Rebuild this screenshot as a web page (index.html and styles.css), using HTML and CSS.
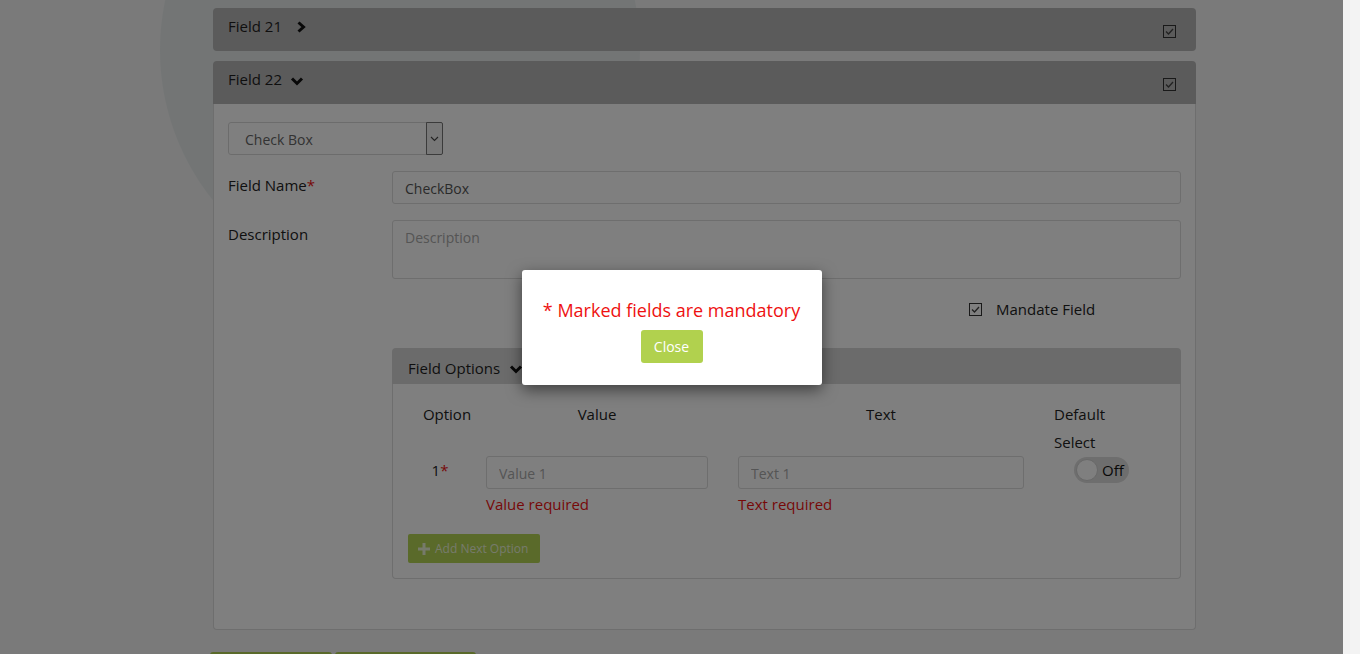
FILE: index.html
```html
<!DOCTYPE html>
<html lang="en">
<head>
<meta charset="utf-8">
<title>Fields</title>
<link rel="stylesheet" href="styles.css">
</head>
<body>
<div class="page">
  <div class="bg-circle"></div>
  <div class="container">
    <div class="panel">
      <div class="panel-head">
        <span class="title">Field 21</span>
        <svg class="chev" width="14" height="14" viewBox="0 0 14 14"><polyline points="4.5,2.5 9.5,7 4.5,11.5" fill="none" stroke="#111" stroke-width="3"/></svg>
        <svg class="head-check" width="13" height="13" viewBox="0 0 13 13"><rect x="0.5" y="0.5" width="12" height="12" fill="none" stroke="#333"/><polyline points="3,6.5 5.5,9 10,4" fill="none" stroke="#444" stroke-width="1.3"/></svg>
      </div>
    </div>
    <div class="panel open">
      <div class="panel-head">
        <span class="title">Field 22</span>
        <svg class="chev down" width="14" height="14" viewBox="0 0 14 14"><polyline points="2,4.5 7,9.5 12,4.5" fill="none" stroke="#111" stroke-width="3"/></svg>
        <svg class="head-check" width="13" height="13" viewBox="0 0 13 13"><rect x="0.5" y="0.5" width="12" height="12" fill="none" stroke="#333"/><polyline points="3,6.5 5.5,9 10,4" fill="none" stroke="#444" stroke-width="1.3"/></svg>
      </div>
      <div class="panel-body">
        <div class="select">
          <span class="select-text">Check Box</span>
          <span class="select-arrow"><svg width="9" height="6" viewBox="0 0 9 6"><polyline points="1,1 4.5,4.5 8,1" fill="none" stroke="#444" stroke-width="1.1"/></svg></span>
        </div>
        <div class="form-row first">
          <label class="label">Field Name<span class="req">*</span></label>
          <input class="input" type="text" value="CheckBox">
        </div>
        <div class="form-row">
          <label class="label">Description</label>
          <textarea class="input textarea" placeholder="Description"></textarea>
        </div>
        <div class="form-row">
          <span></span>
          <div class="mandate">
            <svg width="13" height="13" viewBox="0 0 13 13"><rect x="0.5" y="0.5" width="12" height="12" fill="none" stroke="#333"/><polyline points="3,6.5 5.5,9 10,4" fill="none" stroke="#444" stroke-width="1.3"/></svg>
            <span>Mandate Field</span>
          </div>
        </div>
        <div class="form-row">
          <span></span>
          <div class="options">
            <div class="options-head">
              <span>Field Options</span>
              <svg class="chev down" width="14" height="14" viewBox="0 0 14 14"><polyline points="2,4.5 7,9.5 12,4.5" fill="none" stroke="#111" stroke-width="3"/></svg>
            </div>
            <div class="options-body">
              <div class="opt-grid">
                <div class="col-h center">Option</div>
                <div class="col-h center pr">Value</div>
                <div class="col-h center pr">Text</div>
                <div class="col-h default">Default Select</div>

                <div class="opt-num">1<span class="req">*</span></div>
                <div class="pr">
                  <input class="input" type="text" placeholder="Value 1">
                  <div class="error">Value required</div>
                </div>
                <div class="pr">
                  <input class="input" type="text" placeholder="Text 1">
                  <div class="error">Text required</div>
                </div>
                <div>
                  <div class="toggle"><span class="knob"></span><span class="toggle-text">Off</span></div>
                </div>
              </div>
              <button class="add-btn" type="button">
                <svg width="12" height="12" viewBox="0 0 12 12"><path d="M4.5 0h3v4.5H12v3H7.5V12h-3V7.5H0v-3h4.5z" fill="rgba(255,255,255,0.75)"/></svg>
                <span>Add Next Option</span>
              </button>
            </div>
          </div>
        </div>
      </div>
    </div>
    <div class="actions">
      <button class="green-btn wide1" type="button" aria-label="Save"></button>
      <button class="green-btn wide2" type="button" aria-label="Save and next"></button>
    </div>
  </div>
  <div class="overlay"></div>
  <div class="modal-wrap">
    <div class="modal">
      <p class="modal-text">* Marked fields are mandatory</p>
      <button class="close-btn" type="button">Close</button>
    </div>
  </div>
</div>
<div class="scrollbar"></div>
</body>
</html>
```
FILE: styles.css
```css
html, body {
  margin: 0;
  height: 100%;
  overflow: hidden;
}
body {
  display: flex;
  font-family: "Open Sans", "Liberation Sans", sans-serif;
  background: #f3f3f3;
  color: #222;
}
.page {
  position: relative;
  flex: none;
  width: 1343px;
  height: 654px;
  overflow: hidden;
  background: #f4f4f4;
}
.scrollbar {
  flex: 1;
  background: #f3f3f3;
}
.bg-circle {
  position: absolute;
  left: 160px;
  top: -190px;
  width: 480px;
  height: 480px;
  border-radius: 50%;
  background: #e6ebeb;
}
.container {
  position: relative;
  margin-left: 213px;
  width: 983px;
  padding-top: 8px;
}
.panel {
  margin-bottom: 10px;
}
.panel-head {
  height: 43px;
  box-sizing: border-box;
  background: #b6b6b6;
  border-radius: 4px;
  display: flex;
  align-items: flex-start;
  padding: 8px 20px 0 15px;
  font-size: 15px;
  line-height: 20px;
  color: #1e1e1e;
}
.open .panel-head {
  border-radius: 4px 4px 0 0;
}
.chev {
  margin-left: 12px;
  margin-top: 4px;
}
.chev.down {
  margin-left: 8px;
  margin-top: 5px;
}
.head-check {
  margin-left: auto;
  margin-top: 9px;
}
.panel-body {
  background: #fff;
  border: 1px solid #dcdcdc;
  border-top: 0;
  border-radius: 0 0 4px 4px;
  padding: 18px 14px 50px 14px;
}
.select {
  width: 215px;
  height: 33px;
  box-sizing: border-box;
  border: 1px solid #d8d8d8;
  border-radius: 3px;
  display: flex;
  align-items: stretch;
  background: #fff;
}
.select-text {
  flex: 1;
  padding-left: 16px;
  padding-top: 1px;
  font-size: 14px;
  line-height: 31px;
  color: #666;
}
.select-arrow {
  width: 17px;
  box-sizing: border-box;
  border: 1px solid #777;
  border-radius: 0 2px 2px 0;
  margin: -1px -1px -1px 0;
  background: #f0f0f0;
  display: flex;
  align-items: center;
  justify-content: center;
}
.form-row {
  display: grid;
  grid-template-columns: 164px 1fr;
  margin-top: 16px;
}
.label {
  font-size: 15px;
  line-height: 20px;
  padding-top: 4px;
  color: #222;
}
.req {
  color: #ee1111;
}
.input {
  display: block;
  width: 100%;
  height: 33px;
  box-sizing: border-box;
  border: 1px solid #dcdcdc;
  border-radius: 3px;
  padding: 2px 12px 0 12px;
  font-family: "Open Sans", "Liberation Sans", sans-serif;
  font-size: 14px;
  color: #555;
  background: #fff;
  outline: none;
}
.input::placeholder {
  color: #aaa;
}
.textarea {
  height: 59px;
  padding-top: 7px;
  resize: none;
}
.mandate {
  display: flex;
  align-items: center;
  gap: 14px;
  padding-left: 577px;
  margin-top: 4px;
  font-size: 15px;
  line-height: 20px;
  color: #222;
}
.options {
  margin-top: 13px;
}
.options-head {
  height: 36px;
  box-sizing: border-box;
  background: #d6d6d6;
  border-radius: 4px 4px 0 0;
  padding: 10px 15px 0 16px;
  display: flex;
  align-items: flex-start;
  font-size: 15px;
  line-height: 20px;
  color: #1e1e1e;
}
.options-head .chev.down {
  margin-left: 9px;
  margin-top: 4px;
}
.options-body {
  border: 1px solid #dcdcdc;
  border-top: 0;
  border-radius: 0 0 4px 4px;
  padding: 16px 15px 15px 15px;
}
.opt-grid {
  display: grid;
  grid-template-columns: 78px 252px 316px 1fr;
  font-size: 15px;
  color: #222;
}
.col-h {
  line-height: 28px;
}
.center {
  text-align: center;
}
.pr {
  padding-right: 30px;
}
.default {
  width: 70px;
}
.opt-num {
  text-align: center;
  line-height: 28px;
  padding-right: 14px;
}
.error {
  margin-top: 5px;
  line-height: 20px;
  font-size: 15px;
  color: #ee1111;
}
.toggle {
  margin-left: 20px;
  margin-top: 1px;
  width: 55px;
  height: 26px;
  box-sizing: border-box;
  border-radius: 13px;
  background: #dcdcdc;
  display: flex;
  align-items: center;
  padding-left: 2px;
}
.knob {
  width: 22px;
  height: 22px;
  border-radius: 50%;
  background: #fff;
  box-sizing: border-box;
  border: 1px solid #d0d0d0;
}
.toggle-text {
  margin-left: 4px;
  font-size: 15px;
  color: #111;
}
.add-btn {
  margin-top: 20px;
  height: 29px;
  width: 132px;
  border: 0;
  border-radius: 2px;
  background: #b4d454;
  display: flex;
  align-items: center;
  gap: 5px;
  padding: 0 10px;
  font-family: "Open Sans", "Liberation Sans", sans-serif;
  font-size: 12px;
  color: rgba(255, 255, 255, 0.78);
}
.actions {
  display: flex;
  gap: 3px;
  margin-top: 22px;
  margin-left: -3px;
}
.green-btn {
  height: 34px;
  border: 0;
  border-radius: 3px;
  background: #b4d454;
}
.wide1 { width: 122px; }
.wide2 { width: 141px; }
.overlay {
  position: absolute;
  inset: 0;
  background: rgba(0, 0, 0, 0.5);
}
.modal-wrap {
  position: absolute;
  inset: 0;
  display: flex;
  align-items: center;
  justify-content: center;
}
.modal {
  width: 300px;
  height: 115px;
  box-sizing: border-box;
  background: #fff;
  border-radius: 3px;
  box-shadow: 0 5px 15px rgba(0, 0, 0, 0.5);
  padding-top: 28px;
  text-align: center;
}
.modal-text {
  margin: 0;
  font-size: 18px;
  line-height: 24px;
  color: #ee1111;
}
.close-btn {
  margin-top: 8px;
  height: 33px;
  width: 62px;
  border: 0;
  border-radius: 3px;
  background: #b1d14e;
  color: #fff;
  font-family: "Open Sans", "Liberation Sans", sans-serif;
  font-size: 14px;
}
```
